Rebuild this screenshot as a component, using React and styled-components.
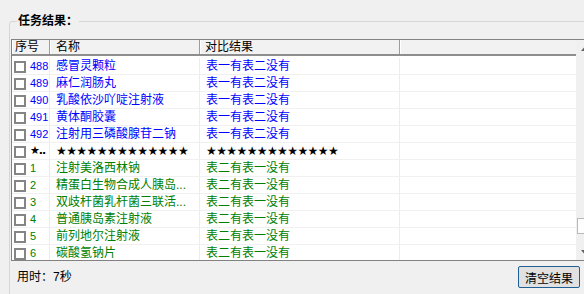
import React from "react";
import styled, { createGlobalStyle } from "styled-components";

const GlobalStyle = createGlobalStyle`
  html, body {
    margin: 0;
    padding: 0;
    background: #f0f0f0;
    overflow: hidden;
  }
  body {
    font-family: "Liberation Sans", "Noto Sans CJK SC", sans-serif;
    font-size: 12px;
    color: #000;
  }
`;

const BLUE = "#0000ff";
const GREEN = "#008000";

const columns = [
  { key: "no", title: "序号", width: 38, pad: 3 },
  { key: "name", title: "名称", width: 150, pad: 6 },
  { key: "result", title: "对比结果", width: 200, pad: 5 },
  { key: "extra", title: "", width: 176, pad: 5 },
];

const STARS = "★★★★★★★★★★★★★";

const rows = [
  { no: "488", name: "感冒灵颗粒", result: "表一有表二没有", color: BLUE },
  { no: "489", name: "麻仁润肠丸", result: "表一有表二没有", color: BLUE },
  { no: "490", name: "乳酸依沙吖啶注射液", result: "表一有表二没有", color: BLUE },
  { no: "491", name: "黄体酮胶囊", result: "表一有表二没有", color: BLUE },
  { no: "492", name: "注射用三磷酸腺苷二钠", result: "表一有表二没有", color: BLUE },
  { no: "★..", name: STARS, result: STARS, color: "#000", star: true },
  { no: "1", name: "注射美洛西林钠", result: "表二有表一没有", color: GREEN },
  { no: "2", name: "精蛋白生物合成人胰岛...", result: "表二有表一没有", color: GREEN },
  { no: "3", name: "双歧杆菌乳杆菌三联活...", result: "表二有表一没有", color: GREEN },
  { no: "4", name: "普通胰岛素注射液", result: "表二有表一没有", color: GREEN },
  { no: "5", name: "前列地尔注射液", result: "表二有表一没有", color: GREEN },
  { no: "6", name: "碳酸氢钠片", result: "表二有表一没有", color: GREEN },
];

// where the list happens to be scrolled to
const scrollFraction = 0.91;
const TRACK = 186;
const THUMB = 16;

const Page = styled.div`
  padding: 14px 0 0 9px;
  width: 700px;
`;

const GroupBox = styled.fieldset`
  margin: 0;
  padding: 11px 2px 0 1px;
  width: 582px;
  height: 300px;
  border: 1px solid #d6d6d6;
  border-radius: 3px;
  min-width: 0;
`;

const Title = styled.legend`
  margin-left: 6px;
  padding: 0 1px;
  font-weight: bold;
  font-size: 12px;
  line-height: 14px;
`;

const ListView = styled.div`
  display: flex;
  width: 582px;
  height: 222px;
  box-sizing: border-box;
  border: 1px solid #828282;
  border-right: none;
  background: #fff;
`;

const Table = styled.div`
  width: 564px;
  display: flex;
  flex-direction: column;
`;

const Header = styled.div`
  display: flex;
  height: 16px;
  box-sizing: border-box;
  background: #f2f2f2;
  border-bottom: 2px solid #8e8e8e;
`;

const HeaderCell = styled.div`
  width: ${(p) => p.$w}px;
  flex: none;
  box-sizing: border-box;
  padding-left: ${(p) => p.$pad}px;
  border-right: ${(p) => (p.$last ? "none" : "1px solid #9c9c9c")};
  box-shadow: inset 1px 0 0 #fff;
  line-height: 14px;
  white-space: nowrap;
`;

const Body = styled.div`
  flex: 1;
  overflow: hidden;
  padding-top: 2px;
`;

const Row = styled.div`
  display: flex;
  height: 17px;
  box-sizing: border-box;
  border-bottom: 1px solid #f0f0f0;
  color: ${(p) => p.$color};
`;

const Cell = styled.div`
  width: ${(p) => p.$w}px;
  flex: none;
  box-sizing: border-box;
  padding-left: ${(p) => p.$pad}px;
  border-right: ${(p) => (p.$last ? "none" : "1px solid #ececec")};
  line-height: 16px;
  white-space: nowrap;
  overflow: hidden;
  font-family: ${(p) =>
    p.$star
      ? '"DejaVu Sans", sans-serif'
      : '"Liberation Sans", "Noto Sans CJK SC", sans-serif'};
  font-weight: ${(p) => (p.$star ? "bold" : "normal")};
  letter-spacing: ${(p) => (p.$star ? "-0.6px" : "0")};
`;

const NoCell = styled(Cell)`
  display: flex;
  align-items: center;
  gap: 4px;
  padding-left: 2px;
`;

const Check = styled.span`
  flex: none;
  width: 12px;
  height: 12px;
  box-sizing: border-box;
  border: 2px solid #858585;
  background: #fff;
  margin-top: 1px;
`;

const Num = styled.span`
  font-size: 11px;
  font-family: ${(p) => (p.$star ? '"DejaVu Sans", sans-serif' : "inherit")};
  font-weight: ${(p) => (p.$star ? "bold" : "normal")};
  letter-spacing: ${(p) => (p.$star ? "-1px" : "0")};
`;

const ScrollBar = styled.div`
  width: 17px;
  flex: none;
  display: flex;
  flex-direction: column;
  background: #f0f0f0;
`;

const ArrowButton = styled.div`
  height: 17px;
  flex: none;
  display: flex;
  align-items: center;
  justify-content: center;
  color: #606060;
`;

const Track = styled.div`
  flex: 1;
`;

const Thumb = styled.div`
  width: 15px;
  height: ${THUMB}px;
  margin-left: 1px;
  box-sizing: border-box;
  border: 1px solid #b9b9b9;
  background: #fdfdfd;
`;

const Footer = styled.div`
  display: flex;
  align-items: center;
  justify-content: space-between;
  padding: 5px 13px 0 6px;
`;

const Elapsed = styled.span`
  line-height: 16px;
`;

const Button = styled.button`
  width: 62px;
  height: 22px;
  padding: 0;
  border: 1px solid #1f5f93;
  border-radius: 2px;
  background: #e1e1e1;
  font-family: "Liberation Sans", "Noto Sans CJK SC", sans-serif;
  font-size: 12px;
  color: #000;
`;

const Arrow = ({ down }) => (
  <svg width="7" height="4" viewBox="0 0 7 4">
    <path d={down ? "M0 0 H7 L3.5 4 Z" : "M0 4 H7 L3.5 0 Z"} fill="currentColor" />
  </svg>
);

export default function App() {
  return (
    <>
      <GlobalStyle />
      <Page>
        <GroupBox>
          <Title>任务结果：</Title>
          <ListView>
            <Table>
              <Header>
                {columns.map((c, i) => (
                  <HeaderCell key={c.key} $w={c.width} $pad={c.pad} $last={i === columns.length - 1}>
                    {c.title}
                  </HeaderCell>
                ))}
              </Header>
              <Body>
                {rows.map((r, i) => (
                  <Row key={i} $color={r.color}>
                    <NoCell $w={columns[0].width}>
                      <Check />
                      <Num $star={r.star}>{r.no}</Num>
                    </NoCell>
                    <Cell $w={columns[1].width} $pad={6} $star={r.star}>
                      {r.name}
                    </Cell>
                    <Cell $w={columns[2].width} $pad={6} $star={r.star}>
                      {r.result}
                    </Cell>
                    <Cell $w={columns[3].width} $pad={6} $last />
                  </Row>
                ))}
              </Body>
            </Table>
            <ScrollBar>
              <ArrowButton>
                <Arrow />
              </ArrowButton>
              <Track>
                <Thumb style={{ marginTop: Math.round((TRACK - THUMB) * scrollFraction) + 6 }} />
              </Track>
              <ArrowButton>
                <Arrow down />
              </ArrowButton>
            </ScrollBar>
          </ListView>
          <Footer>
            <Elapsed>用时：7秒</Elapsed>
            <Button>清空结果</Button>
          </Footer>
        </GroupBox>
      </Page>
    </>
  );
}
